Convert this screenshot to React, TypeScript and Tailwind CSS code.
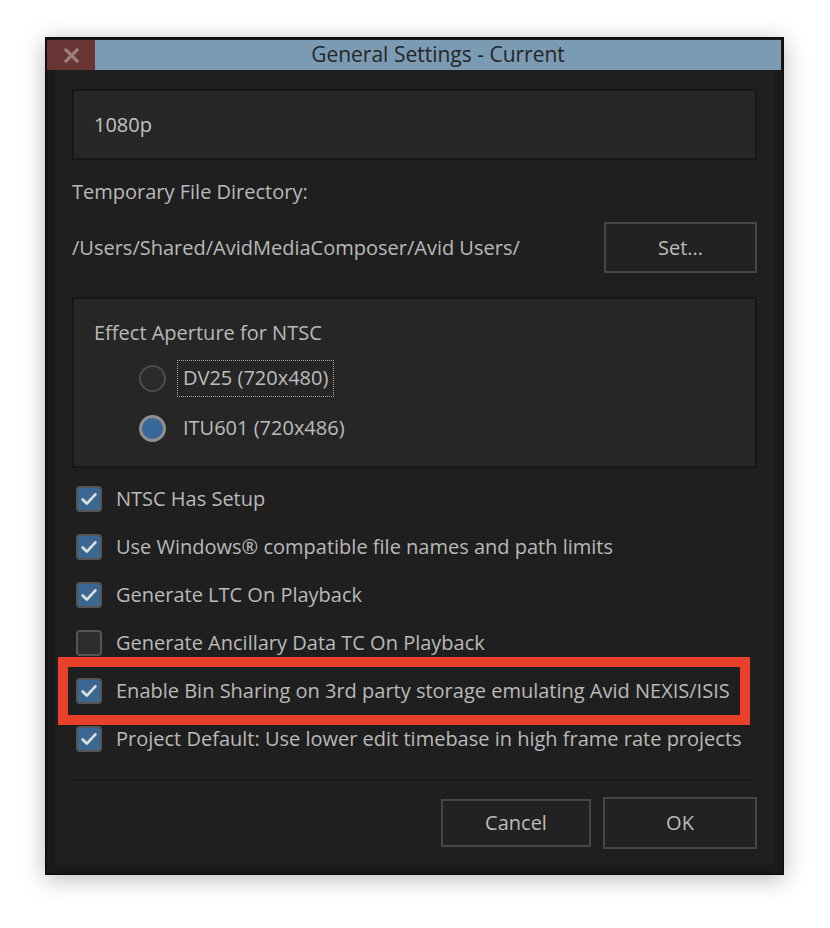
// General Settings dialog
const font = { fontFamily: '"Open Sans", "Noto Sans", sans-serif' };

function Check() {
    return (
        <svg viewBox="0 0 26 26" className="w-[26px] h-[26px]">
            <path d="M5.5 13.5 L10.5 18.5 L20.5 7.5" fill="none" stroke="#dedede" strokeWidth="3.2" strokeLinecap="round" strokeLinejoin="round" />
        </svg>
    );
}

function CheckRow({ label, checked }: { label: string; checked: boolean }) {
    return (
        <div className="h-[48px] flex items-center">
            <div
                className={`w-[26px] h-[26px] ml-[4px] rounded-[4px] border-2 border-[#555] flex items-center justify-center ${checked ? "bg-[#3a6892]" : "bg-[#2d2d2d]"}`}
            >
                {checked && <Check />}
            </div>
            <span className="ml-[14px] text-[20px] text-[#b9b9b9] leading-[26px]">{label}</span>
        </div>
    );
}

function Button({ label, primary }: { label: string; primary?: boolean }) {
    return (
        <div
            className={`flex items-center justify-center text-[20px] text-[#bcbcbc] bg-[#222] border-2 border-[#464646] ${primary ? "w-[154px] h-[52px]" : "w-[150px] h-[48px]"}`}
        >
            {label}
        </div>
    );
}

export default function App() {
    return (
        <div className="w-[830px] h-[928px] bg-white pl-[45px] pt-[37px]" style={font}>
            <div className="w-[739px] h-[838px] border-2 border-[#101010] bg-[#1a1a1a] shadow-[0_4px_22px_rgba(0,0,0,0.28)] flex flex-col">
                {/* Title bar */}
                <div className="h-[31px] pt-[1px] flex">
                    <div className="w-[48px] h-[30px] bg-[#683434] flex items-center justify-center">
                        <svg viewBox="0 0 17 17" className="w-[17px] h-[17px]">
                            <path d="M3 3 L14 14 M14 3 L3 14" stroke="#9c7c7c" strokeWidth="3.2" strokeLinecap="square" />
                        </svg>
                    </div>
                    <div className="flex-1 h-[30px] bg-[#7b9ab4] flex items-center justify-center text-[21px] text-[#262626] mr-[1px]">
                        General Settings - Current
                    </div>
                </div>
                {/* Body */}
                <div className="flex-1 px-[8px] pb-[7px]">
                    <div className="h-full bg-[#1f1f1f] px-[17px] pt-[19px] flex flex-col">
                        <div className="h-[71px] bg-[#272727] border-2 border-[#171717] flex items-center pl-[20px] text-[20px] text-[#c2c2c2]">
                            1080p
                        </div>
                        <div className="mt-[19px] h-[26px] leading-[26px] text-[20px] text-[#b9b9b9]">Temporary File Directory:</div>
                        <div className="mt-[17px] flex items-center justify-between">
                            <span className="text-[20px] text-[#b9b9b9]">/Users/Shared/AvidMediaComposer/Avid Users/</span>
                            <div className="w-[153px] h-[51px] flex items-center justify-center text-[20px] text-[#bcbcbc] bg-[#222] border-2 border-[#464646]">
                                Set...
                            </div>
                        </div>
                        {/* Aperture group */}
                        <div className="mt-[24px] h-[171px] bg-[#262626] border-2 border-[#161616] pl-[20px] pt-[21px]">
                            <div className="text-[20px] leading-[26px] text-[#b9b9b9]">Effect Aperture for NTSC</div>
                            <div className="mt-[7px] ml-[45px] flex flex-col">
                                <div className="h-[50px] flex items-center">
                                    <div className="w-[27px] h-[27px] rounded-full border-2 border-[#4c4c4c] bg-[#2b2b2b]" />
                                    <span className="ml-[11px] px-[5px] h-[37px] flex items-center border border-dotted border-[#aaa] text-[20px] text-[#bcbcbc]">
                                        DV25 (720x480)
                                    </span>
                                </div>
                                <div className="h-[50px] flex items-center">
                                    <div className="w-[27px] h-[27px] rounded-full border-[3px] border-[#8f8f8f] bg-[#38689a]" />
                                    <span className="ml-[17px] text-[20px] text-[#bcbcbc]">ITU601 (720x486)</span>
                                </div>
                            </div>
                        </div>
                        {/* Options */}
                        <div className="mt-[7px] flex flex-col">
                            <CheckRow label="NTSC Has Setup" checked />
                            <CheckRow label="Use Windows® compatible file names and path limits" checked />
                            <CheckRow label="Generate LTC On Playback" checked />
                            <CheckRow label="Generate Ancillary Data TC On Playback" checked={false} />
                            <div className="-my-[10px] -ml-[14px] w-[692px] border-[10px] border-[#e8402a] pl-[8px] flex items-center">
                                <div className="-ml-[4px]">
                                    <CheckRow label="Enable Bin Sharing on 3rd party storage emulating Avid NEXIS/ISIS" checked />
                                </div>
                            </div>
                            <CheckRow label="Project Default: Use lower edit timebase in high frame rate projects" checked />
                        </div>
                        <div className="mt-[17px] border-t border-[#141414] border-b border-b-[#262626]" />
                        <div className="mt-[15px] flex items-center justify-end gap-[12px]">
                            <Button label="Cancel" />
                            <Button label="OK" primary />
                        </div>
                    </div>
                </div>
            </div>
        </div>
    );
}
